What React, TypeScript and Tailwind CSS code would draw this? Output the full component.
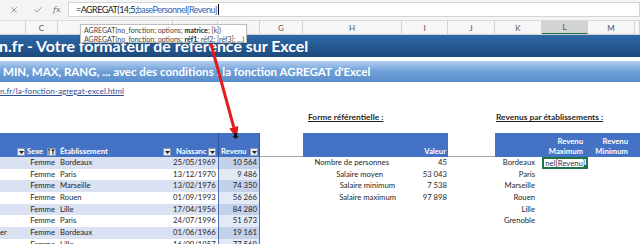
import { X, Check } from 'lucide-react'

const rows = [
  { b: '', city: 'Bordeaux', date: '25/05/1969', rev: '10 564' },
  { b: '', city: 'Paris', date: '13/12/1970', rev: '9 486' },
  { b: '', city: 'Marseille', date: '13/02/1976', rev: '74 350' },
  { b: '', city: 'Rouen', date: '01/09/1993', rev: '56 266' },
  { b: '', city: 'Lille', date: '17/04/1956', rev: '84 280' },
  { b: '', city: 'Paris', date: '24/07/1996', rev: '51 673' },
  { b: 'er', city: 'Bordeaux', date: '01/06/1966', rev: '19 161' },
  { b: '', city: 'Lille', date: '16/09/1957', rev: '77 569' },
]

const stats = [
  { label: 'Nombre de personnes', value: '45', pad: 'pr-[13px]' },
  { label: 'Salaire moyen', value: '53 043', pad: 'pr-[19px]' },
  { label: 'Salaire minimum', value: '7 538', pad: 'pr-[7px]' },
  { label: 'Salaire maximum', value: '97 898', pad: 'pr-[6px]' },
]

const cities = ['Bordeaux', 'Paris', 'Marseille', 'Rouen', 'Lille', 'Grenoble']

const grid =
  'grid grid-cols-[26px_32px_115px_45px_42px_43px_99px_46px_47px_47px_46px_47px_5px]'

const colLetters = ['', 'C', 'D', 'E', 'F', 'G', 'H', 'I', 'J', 'K', 'L', 'M', '']

function Dropdown() {
  return (
    <div className="w-[8px] h-[8px] shrink-0 bg-[#e9edf5] border border-[#8d9ab3] flex items-center justify-center">
      <svg width="5" height="3" viewBox="0 0 5 3">
        <path d="M0 0h5L2.5 3z" fill="#222" />
      </svg>
    </div>
  )
}

function SortFilter() {
  return (
    <div className="w-[9px] h-[8px] shrink-0 bg-[#e9edf5] border border-[#8d9ab3] flex items-center justify-center">
      <svg width="7" height="6" viewBox="0 0 7 6">
        <path d="M1 0v6M0 1.5L1 0l1 1.5" stroke="#222" strokeWidth="0.8" fill="none" />
        <path d="M3 0.5h4L5.5 2.5V6L4.5 5.2V2.5z" fill="#222" />
      </svg>
    </div>
  )
}

export default function App() {
  return (
    <div className="w-[640px] h-[244px] overflow-hidden bg-white relative font-['Lato',sans-serif] text-[#1f1f1f]">
      {/* Formula bar */}
      <div className="h-[21px] flex bg-[#f4f4f4] border-b border-[#dadada] pt-[2px] pb-[3px]">
        <div className="w-[68px] flex items-center text-[#6b6b6b]">
          <X size={10} strokeWidth={1.6} className="ml-[9px]" />
          <Check size={10} strokeWidth={1.6} className="ml-[14px]" />
          <span className="ml-[10px] italic text-[8px] font-['DejaVu_Serif',serif]">fx</span>
        </div>
        <div className="flex-1 bg-white border border-[#d4d4d4] flex items-center pl-[7px] text-[9px] tracking-[-0.55px]">
          <span className="text-[#222]">=AGREGAT(14;5;</span>
          <span className="text-[#3564b4]">basePersonnel[Revenu]</span>
          <span className="w-px h-[11px] bg-black ml-[1px]" />
        </div>
      </div>

      {/* Column headers */}
      <div className={`${grid} h-[14px] bg-[#f6f6f6] border-b border-[#d0d0d0] text-[8px] text-[#555]`}>
        {colLetters.map((l, i) => (
          <div
            key={i}
            className={`flex items-center justify-center border-r border-[#d2d2d2] ${
              l === 'L' ? 'bg-[#d3d3d3] border-b border-b-[#217346]' : ''
            }`}
          >
            {l}
          </div>
        ))}
      </div>

      {/* Title band */}
      <div className="h-[22px] bg-gradient-to-b from-[#2f69a7] to-[#1d4a7d] flex items-center text-white font-bold text-[15.9px] -ml-[1px] whitespace-nowrap">
        n.fr - Votre formateur de référence sur Excel
      </div>
      <div className="h-[4px]" />
      <div className="h-[21px] bg-gradient-to-b from-[#b3cff0] via-[#6e9fd8] to-[#5a8ecd] flex items-center pl-[3px] text-white font-bold text-[11.55px] whitespace-nowrap">
        MIN, MAX, RANG, ... avec des conditions : la fonction AGREGAT d'Excel
      </div>

      {/* Link */}
      <div className="h-[18px] flex items-center text-[8.2px] text-[#2b4f9c] underline whitespace-nowrap">
        n.fr/la-fonction-agregat-excel.html
      </div>
      <div className="h-[11px]" />
      <div className={`${grid} h-[12px] text-[8.4px] font-bold items-center`}>
        <div className="col-span-6" />
        <div className="col-span-3 pl-[5px] underline whitespace-nowrap">Forme référentielle :</div>
        <div className="col-span-4 pl-[1px] underline whitespace-nowrap">Revenus par établissements :</div>
      </div>
      <div className="h-[10px]" />

      {/* Table header row */}
      <div className={`${grid} h-[24px] text-[7.7px] font-bold text-white`}>
        <div className="bg-[#4472c4] flex items-end justify-end pb-[1px] pr-[1px]">
          <Dropdown />
        </div>
        <div className="bg-[#4472c4] flex items-end pb-[1px] pl-[1px] gap-[4px]">
          <span className="leading-[10px]">Sexe</span>
          <SortFilter />
        </div>
        <div className="bg-[#4472c4] flex items-end pb-[1px] pl-[2px] pr-[2px]">
          <span className="flex-1 leading-[10px]">Établissement</span>
          <Dropdown />
        </div>
        <div className="bg-[#4472c4] flex items-end pb-[1px] pl-[3px] pr-[2px]">
          <span className="flex-1 leading-[10px] overflow-hidden whitespace-nowrap">Naissanc</span>
          <Dropdown />
        </div>
        <div className="bg-[#4472c4] flex items-end pb-[1px] pl-[2px] pr-[1px] border-l border-r border-[#2f55a0]">
          <span className="flex-1 leading-[10px]">Revenu</span>
          <Dropdown />
        </div>
        <div className="border-b border-[#a6a6a6]" />
        <div className="bg-[#4472c4] col-span-2 flex items-end justify-end pb-[1px] pr-[2px] leading-[10px]">
          Valeur
        </div>
        <div className="border-b border-[#a6a6a6]" />
        <div className="bg-[#4472c4]" />
        <div className="bg-[#4472c4] flex flex-col items-end justify-end pr-[5px] pb-[1px] leading-[10px]">
          <span>Revenu</span>
          <span>Maximum</span>
        </div>
        <div className="bg-[#4472c4] flex flex-col items-end justify-end pr-[7px] pb-[1px] leading-[10px]">
          <span>Revenu</span>
          <span>Minimum</span>
        </div>
        <div className="bg-[#4472c4]" />
      </div>

      {/* Data rows */}
      {rows.map((r, i) => {
        const band = i % 2 === 0
        const bg = band ? 'bg-[#d9e1f2]' : 'bg-white'
        const stat = stats[i]
        return (
          <div key={i} className={`${grid} h-[11.7px] text-[7.7px] leading-[11.7px] whitespace-nowrap`}>
            <div className={`${bg} overflow-hidden`}>{r.b}</div>
            <div className={`${bg} text-right pr-[3px]`}>Femme</div>
            <div className={`${bg} pl-[2px]`}>{r.city}</div>
            <div className={`${bg} text-right pr-[3px]`}>{r.date}</div>
            <div
              className={`${
                band ? 'bg-[#c2d0ea]' : 'bg-[#e4eaf5]'
              } text-right pr-[2px] border-l border-r border-[#4a6fb5]`}
            >
              {r.rev}
            </div>
            <div />
            <div className={`text-right ${stat ? stat.pad : ''}`}>{stat?.label}</div>
            <div className="text-right pr-[1px]">{stat?.value}</div>
            <div />
            <div className="text-right pr-[7px]">{cities[i]}</div>
            {i === 0 ? (
              <div className="relative border-2 border-[#217346] bg-white flex justify-end overflow-hidden leading-[8px] text-[#22386b] pr-[1px]">
                nel[Revenu]
                <span className="absolute right-[-1px] bottom-[-1px] w-[3px] h-[3px] bg-[#217346]" />
              </div>
            ) : (
              <div />
            )}
            <div />
            <div />
          </div>
        )
      })}

      {/* Function tooltip */}
      <div className="absolute left-[80px] top-[24px] w-[167px] h-[19px] bg-white border border-[#bdbdbd] shadow-sm pl-[3px] pt-[1px] text-[7px] leading-[8.5px] text-[#444] whitespace-nowrap">
        <div>
          AGREGAT(no_fonction; options; <b className="text-[#222]">matrice</b>; [k])
        </div>
        <div>
          AGREGAT(no_fonction; options; <b className="text-[#222]">réf1</b>; réf2; [réf3]; ...)
        </div>
      </div>

      {/* Red arrow */}
      <svg className="absolute left-0 top-0 pointer-events-none" width="640" height="244">
        <line x1="211" y1="44" x2="233.8" y2="127.4" stroke="#e41b1b" strokeWidth="3" />
        <path d="M237 139L238.3 126.1L229.3 128.6z" fill="#e41b1b" />
        <path d="M234 133h3v3h1.5L235.5 139L232.5 136H234z" fill="#111" />
      </svg>
    </div>
  )
}
